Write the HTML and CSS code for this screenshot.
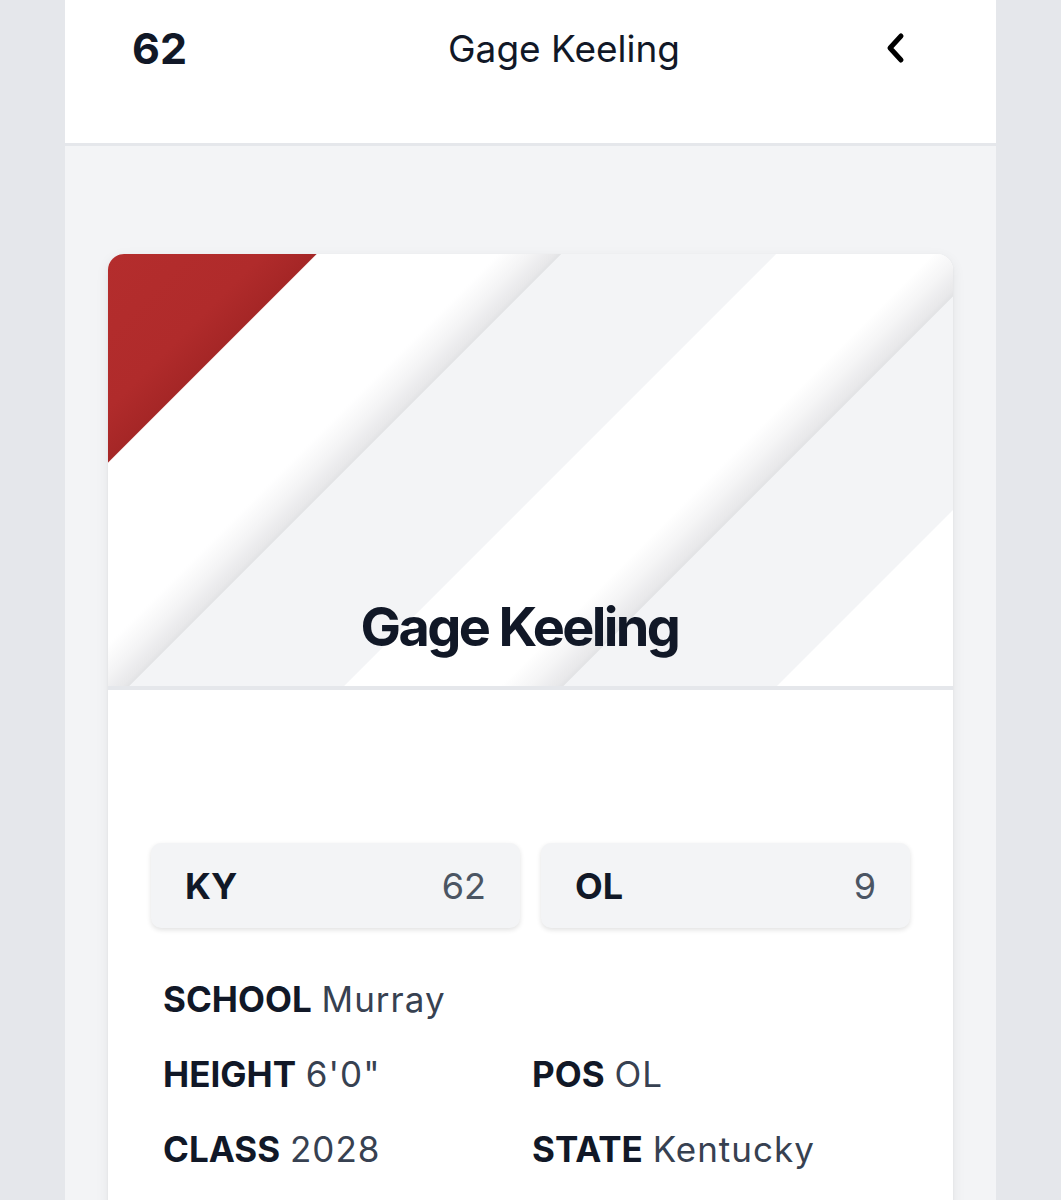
FILE: index.html
```html
<!DOCTYPE html>
<html lang="en">
<head>
<meta charset="utf-8">
<title>Gage Keeling</title>
<link rel="stylesheet" href="styles.css">
</head>
<body>
<div class="app">
  <header class="topbar">
    <div class="topbar-row">
      <span class="top-num">62</span>
      <span class="top-title">Gage Keeling</span>
      <span class="top-back" aria-label="Back">
        <svg width="24" height="32" viewBox="0 0 24 32"><polyline points="17,4 6,16 17,28" fill="none" stroke="#000" stroke-width="5" stroke-linecap="round" stroke-linejoin="round"/></svg>
      </span>
    </div>
  </header>
  <main class="content">
    <section class="card">
      <div class="hero">
        <h1 class="hero-name">Gage Keeling</h1>
      </div>
      <div class="card-body">
        <div class="stats">
          <div class="stat"><span class="stat-label">KY</span><span class="stat-value">62</span></div>
          <div class="stat"><span class="stat-label">OL</span><span class="stat-value">9</span></div>
        </div>
        <div class="info">
          <div class="info-item full"><span class="k">SCHOOL</span> <span class="v">Murray</span></div>
          <div class="info-item"><span class="k">HEIGHT</span> <span class="v">6'0"</span></div>
          <div class="info-item"><span class="k">POS</span> <span class="v">OL</span></div>
          <div class="info-item"><span class="k">CLASS</span> <span class="v">2028</span></div>
          <div class="info-item"><span class="k">STATE</span> <span class="v">Kentucky</span></div>
        </div>
      </div>
    </section>
  </main>
</div>
</body>
</html>
```

FILE: styles.css
```css
* { box-sizing: border-box; }
html, body { margin: 0; padding: 0; }
body {
  background: #e5e7eb;
  font-family: Inter, "Noto Sans", "Liberation Sans", sans-serif;
  color: #111827;
}
.app {
  width: 931px;
  margin: 0 auto;
  min-height: 1200px;
  background: #f3f4f6;
}
.topbar {
  height: 146px;
  background: #fff;
  border-bottom: 3px solid #e5e7eb;
}
.topbar-row {
  height: 96px;
  display: flex;
  align-items: center;
  padding: 0 88px 0 67px;
}
.top-num {
  font-size: 43px;
  font-weight: 700;
  width: 53px;
}
.top-title {
  font-size: 37px;
  font-weight: 400;
  margin-left: 263px;
  letter-spacing: 0;
}
.top-back {
  margin-left: auto;
  display: flex;
  align-items: center;
}
.content {
  padding: 108px 43px 0;
}
.card {
  background: #fff;
  border-radius: 16px;
  overflow: hidden;
  box-shadow: 0 4px 14px rgba(0,0,0,0.07), 0 1px 3px rgba(0,0,0,0.05);
}
.hero {
  height: 436px;
  border-bottom: 4px solid #e5e7eb;
  display: flex;
  align-items: flex-end;
  justify-content: center;
  padding: 0 22px 26px 0;
  background: linear-gradient(135deg,
    #b42d2d 0px, #b02b2b 110px, #a52626 147px,
    #ffffff 148px, #ffffff 276px, #f5f5f6 296px, #e8e8ea 316px, #e2e3e5 320px,
    #f3f4f6 321px, #f3f4f6 472px,
    #ffffff 473px, #ffffff 583px, #f5f5f6 603px, #e8e8ea 623px, #e2e3e5 627px,
    #f3f4f6 628px, #f3f4f6 778px,
    #ffffff 779px, #ffffff 902px);
}
.hero-name {
  margin: 0;
  font-size: 54px;
  font-weight: 700;
  letter-spacing: -2.6px;
  line-height: 1.2;
  color: #111827;
}
.card-body {
  padding: 153px 43px 40px;
}
.stats {
  display: grid;
  grid-template-columns: 1fr 1fr;
  column-gap: 21px;
}
.stat {
  height: 85px;
  background: #f3f4f6;
  border-radius: 10px;
  box-shadow: 0 2px 5px rgba(0,0,0,0.12);
  display: flex;
  align-items: center;
  justify-content: space-between;
  padding: 0 34px;
  font-size: 36px;
}
.stat-label { font-weight: 700; color: #111827; }
.stat-value { font-weight: 400; color: #4b5563; }
.info {
  margin-top: 34px;
  padding: 0 12px;
  display: grid;
  grid-template-columns: 369px 1fr;
  font-size: 35px;
  line-height: 75px;
}
.info-item.full { grid-column: 1 / -1; }
.info .k { font-weight: 700; color: #111827; letter-spacing: 0; }
.info .v { font-weight: 400; color: #374151; letter-spacing: 1px; }
```
